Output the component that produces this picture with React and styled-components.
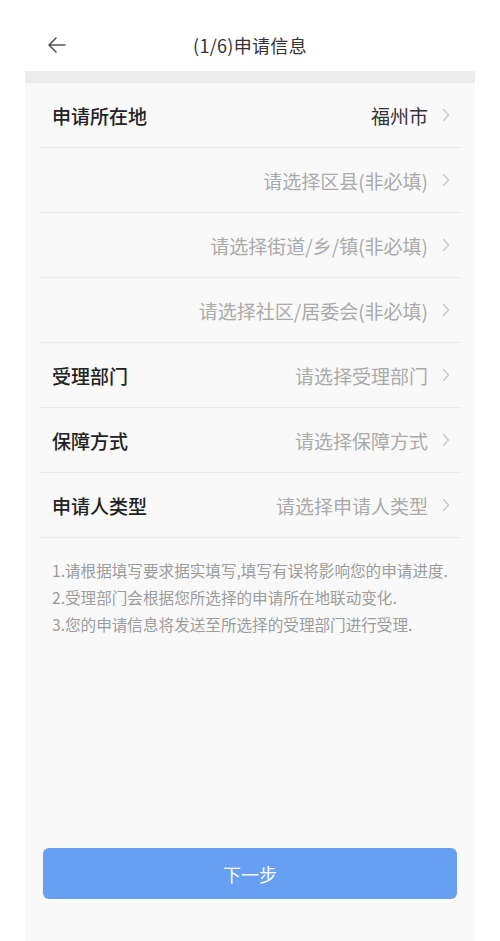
import styled, { createGlobalStyle } from "styled-components";

const GlobalStyle = createGlobalStyle`
  html, body {
    margin: 0;
    padding: 0;
    background: #fff;
  }
  body {
    font-family: "Noto Sans CJK SC", "Noto Sans", sans-serif;
  }
`;

const rows = [
  { label: "申请所在地", value: "福州市", filled: true },
  { label: "", value: "请选择区县(非必填)" },
  { label: "", value: "请选择街道/乡/镇(非必填)" },
  { label: "", value: "请选择社区/居委会(非必填)" },
  { label: "受理部门", value: "请选择受理部门" },
  { label: "保障方式", value: "请选择保障方式" },
  { label: "申请人类型", value: "请选择申请人类型" },
];

const notes = [
  "1.请根据填写要求据实填写,填写有误将影响您的申请进度.",
  "2.受理部门会根据您所选择的申请所在地联动变化.",
  "3.您的申请信息将发送至所选择的受理部门进行受理.",
];

function Chevron() {
  return (
    <svg width="8" height="14" viewBox="0 0 8 14" fill="none">
      <polyline
        points="1.5,1.5 6.5,7 1.5,12.5"
        stroke="#c8c8c8"
        strokeWidth="1.3"
        strokeLinecap="round"
        strokeLinejoin="round"
      />
    </svg>
  );
}

export default function App() {
  return (
    <>
      <GlobalStyle />
      <Page>
        <Header>
          <BackButton>
            <svg width="20" height="18" viewBox="0 0 20 18" fill="none">
              <path
                d="M18 9H3M9 2L2 9l7 7"
                stroke="#555"
                strokeWidth="1.6"
                strokeLinecap="round"
                strokeLinejoin="round"
              />
            </svg>
          </BackButton>
          <Title>(1/6)申请信息</Title>
        </Header>
        <Panel>
          <Strip />
          <List>
            {rows.map((row, i) => (
              <Row key={i}>
                <Label>{row.label}</Label>
                <Value $filled={row.filled}>{row.value}</Value>
                <Chevron />
              </Row>
            ))}
          </List>
          <Notes>
            {notes.map((n) => (
              <p key={n}>{n}</p>
            ))}
          </Notes>
          <Footer>
            <NextButton>下一步</NextButton>
          </Footer>
        </Panel>
      </Page>
    </>
  );
}

// 页面
const Page = styled.div`
  width: 500px;
  min-height: 941px;
  display: flex;
  flex-direction: column;
  background: #fff;
`;

// 顶部导航
const Header = styled.div`
  height: 71px;
  display: flex;
  align-items: center;
  justify-content: center;
  position: relative;
  background: #fff;
`;

const BackButton = styled.div`
  position: absolute;
  left: 47px;
  top: 36px;
  display: flex;
`;

const Title = styled.div`
  font-size: 18px;
  color: #333;
  margin-top: 18px;
  letter-spacing: 0.3px;
`;

// 内容面板
const Panel = styled.div`
  flex: 1;
  margin: 0 25px;
  display: flex;
  flex-direction: column;
  background: #f9f9f9;
`;

const Strip = styled.div`
  height: 12px;
  background: #ededed;
`;

const List = styled.div`
  padding: 0 14px 0 15px;
`;

const Row = styled.div`
  height: 64px;
  display: flex;
  align-items: center;
  gap: 14px;
  padding: 0 11px 0 12px;
  border-bottom: 1px solid #ececec;
`;

const Label = styled.div`
  font-size: 19px;
  font-weight: 500;
  color: #222;
  flex: 1;
`;

const Value = styled.div`
  font-size: 19px;
  color: ${(p) => (p.$filled ? "#333" : "#aaa")};
`;

// 提示
const Notes = styled.div`
  padding: 19px 0 0 27px;
  font-size: 15.6px;
  line-height: 27px;
  color: #9c9c9c;
  p {
    margin: 0;
  }
`;

const Footer = styled.div`
  margin-top: auto;
  padding: 0 18px 42px;
`;

const NextButton = styled.button`
  width: 100%;
  height: 51px;
  border: none;
  border-radius: 6px;
  background: #679ff2;
  color: #fff;
  font-family: "Noto Sans CJK SC", sans-serif;
  font-size: 18px;
`;
